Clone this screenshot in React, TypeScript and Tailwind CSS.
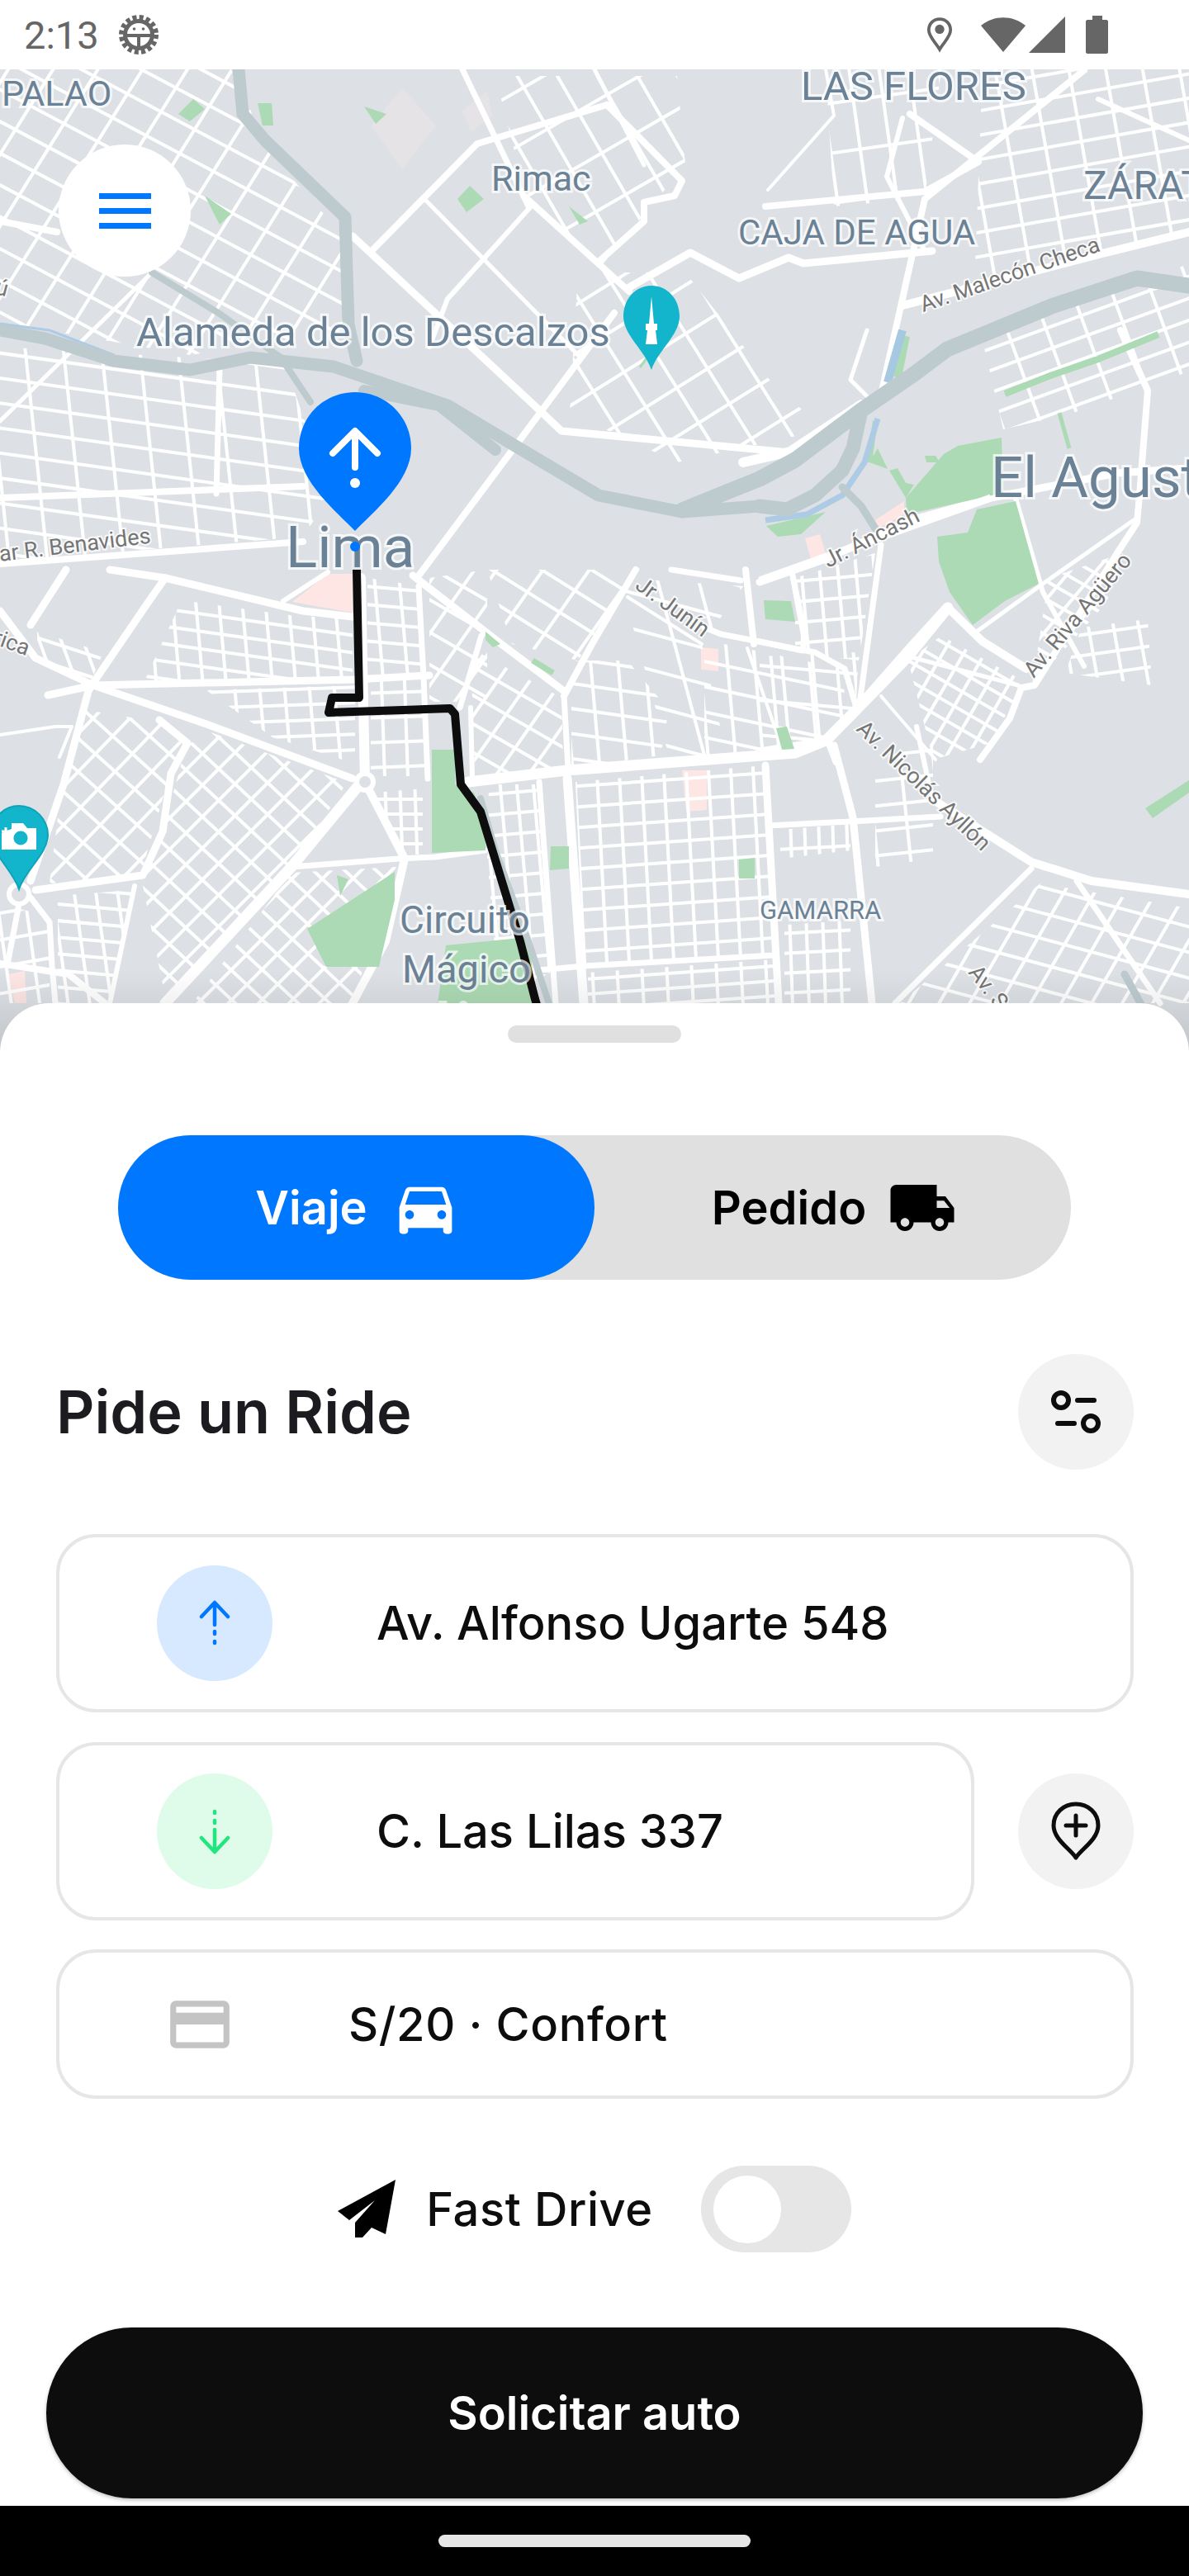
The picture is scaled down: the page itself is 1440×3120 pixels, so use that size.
import React from 'react';
import { MdDirectionsCar, MdLocalShipping, MdCreditCard } from 'react-icons/md';

type Pts = string;

// dense street blocks: two families of parallel lines clipped to a polygon
const GRIDS: { pts: Pts; a1: number; a2: number; s1: number; s2: number; w?: number }[] = [
  { pts: '0,84 280,84 330,190 420,290 420,400 230,430 0,390', a1: 28, a2: -58, s1: 34, s2: 46 },
  { pts: '0,420 345,440 400,600 367,650 0,680', a1: 8, a2: 84, s1: 30, s2: 46 },
  { pts: '45,765 125,790 110,825 45,795', a1: 18, a2: 70, s1: 25, s2: 25 },
  { pts: '220,727 350,745 427,750 427,820 175,825', a1: 8, a2: 85, s1: 21, s2: 28 },
  { pts: '445,700 510,710 512,815 445,820', a1: 5, a2: 85, s1: 22, s2: 30 },
  { pts: '250,836 430,830 430,925 330,893', a1: -2, a2: 85, s1: 19, s2: 30 },
  { pts: '449,825 512,822 518,940 449,940', a1: -2, a2: 88, s1: 30, s2: 28 },
  { pts: '452,960 512,955 512,1035 486,1035', a1: 0, a2: 88, s1: 18, s2: 18 },
  { pts: '225,905 250,885 420,948 353,1050 200,1207 173,1073 197,1007', a1: 43, a2: -45, s1: 28, s2: 27 },
  { pts: '105,860 193,875 225,905 205,940 170,1060 60,1070 75,950', a1: 42, a2: -46, s1: 30, s2: 32 },
  { pts: '353,1057 480,1050 440,1130 373,1123 393,1170 440,1170 430,1215 233,1215', a1: 43, a2: -45, s1: 26, s2: 26 },
  { pts: '70,1085 160,1078 130,1215 70,1215', a1: 5, a2: 82, s1: 20, s2: 26 },
  { pts: '520,700 590,690 590,850 520,850', a1: 30, a2: -55, s1: 34, s2: 36 },
  { pts: '590,690 770,690 700,800 620,780', a1: 32, a2: -55, s1: 32, s2: 46 },
  { pts: '570,785 680,845 682,930 575,940', a1: 30, a2: -55, s1: 30, s2: 32 },
  { pts: '692,800 760,800 810,860 800,915 692,930', a1: 8, a2: 85, s1: 30, s2: 33 },
  { pts: '750,700 900,710 850,780 880,915 810,915', a1: 15, a2: 75, s1: 42, s2: 48 },
  { pts: '853,775 1020,810 1025,865 990,900 853,918', a1: 12, a2: 85, s1: 30, s2: 33 },
  { pts: '592,950 650,950 670,1175 605,1215 590,1040', a1: -5, a2: 85, s1: 25, s2: 20 },
  { pts: '697,947 927,927 940,1155 707,1172', a1: -4, a2: 87, s1: 25, s2: 27 },
  { pts: '712,1178 937,1162 945,1215 712,1215', a1: -4, a2: 87, s1: 18, s2: 30 },
  { pts: '945,1005 1030,998 1030,1030 945,1040', a1: -3, a2: 88, s1: 30, s2: 17 },
  { pts: '950,1120 1030,1115 1030,1215 950,1215', a1: -3, a2: 88, s1: 24, s2: 20 },
  { pts: '1190,84 1440,84 1440,285 1180,350', a1: -10, a2: 80, s1: 29, s2: 44 },
  { pts: '1187,400 1440,320 1440,450 1300,500 1215,520', a1: -20, a2: 70, s1: 25, s2: 45 },
  { pts: '963,700 1060,670 1040,800 963,790', a1: -5, a2: 85, s1: 25, s2: 22 },
  { pts: '920,795 1040,790 1035,890 920,905', a1: 5, a2: 85, s1: 42, s2: 50 },
  { pts: '1140,770 1240,825 1200,900 1130,920 1100,800', a1: 30, a2: -60, s1: 20, s2: 22 },
  { pts: '1270,700 1360,670 1340,730 1250,830', a1: 30, a2: -50, s1: 19, s2: 24 },
  { pts: '1310,760 1390,750 1395,830 1290,815', a1: -8, a2: 80, s1: 25, s2: 30 },
  { pts: '1260,1070 1440,1100 1440,1215 1090,1215', a1: -60, a2: 15, s1: 32, s2: 30 },
  { pts: '1060,920 1130,900 1130,1040 1060,1050', a1: -6, a2: 84, s1: 30, s2: 40 },
  { pts: '700,330 830,330 940,470 1000,520 820,560 690,500', a1: 58, a2: -32, s1: 44, s2: 50 },
  { pts: '600,92 820,92 830,200 730,320 640,250', a1: 60, a2: -30, s1: 42, s2: 58 },
  { pts: '1000,84 1140,84 1120,240 1010,250', a1: 82, a2: -8, s1: 36, s2: 60 },
  { pts: '0,1095 60,1110 60,1215 0,1215', a1: -10, a2: 82, s1: 32, s2: 34 },
];

const ROADS: { d: string; w: number }[] = [
  { d: 'M58 842L113 830L430 823L520 818', w: 9 },
  { d: 'M0 740L43 797L113 830L250 877L427 943', w: 9 },
  { d: 'M200 700L177 733L113 827L107 837L77 950L37 1067', w: 9 },
  { d: 'M80 690L37 757', w: 9 },
  { d: 'M133 690L200 700L367 740L427 747', w: 9 },
  { d: 'M343 728L397 693', w: 6 },
  { d: 'M437 700L440 850L442 947', w: 12 },
  { d: 'M507 710L513 820L518 943', w: 7 },
  { d: 'M433 953L353 1050L200 1215', w: 13 },
  { d: 'M447 957L490 1040L467 1140L427 1215', w: 10 },
  { d: 'M353 1050L483 1040L527 1038L587 1030', w: 7 },
  { d: 'M193 872L227 900L207 937L197 1007L173 1060L43 1078', w: 9 },
  { d: 'M163 1073L133 1215', w: 6 },
  { d: 'M23 1095L10 1163', w: 7 },
  { d: 'M37 1087L60 1117L63 1170L67 1215', w: 7 },
  { d: 'M0 1167L83 1180L127 1215', w: 8 },
  { d: 'M0 890L67 880L87 880L72 917', w: 4 },
  { d: 'M567 947L687 933L963 912L1000 897L1030 867L1100 795L1148 736', w: 13 },
  { d: 'M683 843L717 780L770 690', w: 8 },
  { d: 'M683 843L688 930', w: 7 },
  { d: 'M500 697L607 780L683 837', w: 9 },
  { d: 'M557 857L583 770', w: 7 },
  { d: 'M570 857L572 943', w: 6 },
  { d: 'M653 947L673 1215', w: 7 },
  { d: 'M687 943L707 1215', w: 11 },
  { d: 'M927 927L943 1215', w: 9 },
  { d: 'M1010 903L1033 990L1056 1215', w: 9 },
  { d: 'M653 1175L707 1170L937 1157', w: 7 },
  { d: 'M930 1000L1030 995L1139 989', w: 7 },
  { d: 'M813 690L897 703', w: 7 },
  { d: 'M853 760L873 768L970 787L987 790L1023 810L1038 860', w: 7 },
  { d: 'M903 690L913 780', w: 8 },
  { d: 'M960 700L973 770L972 788', w: 6 },
  { d: 'M760 723L850 780', w: 4 },
  { d: 'M905 785L945 900', w: 4 },
  { d: 'M920 705L1000 677L1103 630L1200 603L1353 573L1440 567', w: 9 },
  { d: 'M1230 603L1260 707L1263 717L1313 807', w: 6 },
  { d: 'M1357 400L1390 473L1380 600L1377 633L1353 670L1253 830L1237 833L1223 870L1187 920', w: 8 },
  { d: 'M1067 660L1040 860', w: 7 },
  { d: 'M960 697L975 770L972 788L920 777', w: 7 },
  { d: 'M1003 897L1103 783L1147 735L1190 777L1243 810', w: 10 },
  { d: 'M1100 795L1233 830', w: 5 },
  { d: 'M1180 767L1263 707L1373 630', w: 5 },
  { d: 'M920 910L1003 897L1013 923', w: 9 },
  { d: 'M1067 843L1133 920', w: 4 },
  { d: 'M1129 968L1249 1044L1322 1067L1440 1083', w: 10 },
  { d: 'M1110 880L1129 968', w: 6 },
  { d: 'M1249 1052L1084 1215', w: 7 },
  { d: 'M1304 1067L1405 1215', w: 7 },
  { d: 'M735 127L578 174L450 304', w: 8 },
  { d: 'M735 127L826 219L817 237L780 245L780 268L725 317', w: 8 },
  { d: 'M634 237L762 353', w: 8 },
  { d: 'M427 286L661 504L680 522L946 547', w: 9 },
  { d: 'M514 241L700 430', w: 5 },
  { d: 'M643 250L542 362L520 420', w: 6 },
  { d: 'M762 348L836 306L895 337L955 312L973 319L1129 304', w: 9 },
  { d: 'M927 250L1120 232L1185 196L1102 138', w: 8 },
  { d: 'M1313 85L1120 241L1065 487', w: 8 },
  { d: 'M1093 143L1074 214L1120 304', w: 6 },
  { d: 'M1093 370L1331 308L1440 281', w: 10 },
  { d: 'M900 560L957 547L1043 490', w: 12 },
  { d: 'M1050 400L1030 460L1050 480', w: 5 },
  { d: 'M0 603L367 589', w: 8 },
  { d: 'M0 683L367 656', w: 8 },
  { d: 'M0 268L69 281', w: 8 },
  { d: 'M266 446L262 598', w: 7 },
  { d: 'M744 379L634 527L505 700', w: 8 },
  { d: 'M560 84L640 250', w: 7 },
  { d: 'M720 84L780 200', w: 5 },
  { d: 'M1000 84L1010 140L930 230', w: 4 },
  { d: 'M0 510L184 330', w: 5 },
  { d: 'M1330 120L1440 170', w: 6 },
];

const GREENS: Pts[] = [
  '1097,603 1143,550 1160,540 1213,530 1215,597 1098,623',
  '1183,617 1230,607 1258,707 1217,728 1178,757 1150,717 1137,680 1135,650 1172,645',
  '1053,560 1063,543 1075,568',
  '1077,570 1087,567 1097,585 1107,587 1097,603',
  '1120,552 1133,552 1138,560 1122,560',
  '928,637 1000,620 970,647 942,650',
  '925,727 958,728 963,753 927,750',
  '940,882 953,880 962,907 947,908',
  '523,908 551,908 551,950 574,960 588,1006 588,1030 523,1033',
  '478,1056 372,1125 395,1171 459,1171 478,1090',
  '667,1025 689,1025 689,1052 666,1054',
  '895,1041 914,1039 914,1064 895,1064',
  '588,765 606,780 597,784 588,775',
  '1387,979 1440,945 1440,960 1396,991',
  '540,1145 640,1135 650,1215 530,1215',
  '408,1060 422,1065 412,1085',
  '441,129 468,138 455,150',
  '569,225 586,241 565,257 554,241',
  '689,250 712,268 702,272',
  '248,237 280,259 266,272',
  '234,120 248,132 230,147 216,138',
  '312,125 329,125 331,152 318,152',
];

const GREEN_STRIPS: { d: string; w: number }[] = [
  { d: 'M1217 477L1272 455L1330 435L1403 405', w: 8 },
  { d: 'M1283 500L1295 543', w: 5 },
  { d: 'M1097 407L1087 457', w: 10 },
  { d: 'M1060 510L1053 560', w: 6 },
  { d: 'M645 800L670 815', w: 7 },
  { d: 'M775 445L815 390', w: 3 },
];

const PINKS: { pts: Pts; c: string }[] = [
  { pts: '450,152 487,107 528,152 487,205', c: '#e6e3e6' },
  { pts: '560,134 590,110 596,140 570,160', c: '#e6e3e6' },
  { pts: '354,729 397,695 427,695 427,742', c: '#fde6e3' },
  { pts: '826,933 856,933 856,981 831,983', c: '#fde6e3' },
  { pts: '849,784 870,786 870,813 849,811', c: '#fde6e3' },
  { pts: '975,652 993,647 1000,670 982,677', c: '#fde6e3' },
  { pts: '1060,630 1095,607 1095,623 1063,640', c: '#fde6e3' },
  { pts: '10,1180 30,1176 32,1215 18,1215', c: '#fde6e3' },
];

const LABELS: { t: string; x: number; y: number; s: number }[] = [
  { t: 'PALAO', x: 2, y: 128, s: 43 },
  { t: 'LAS FLORES', x: 970, y: 121, s: 49 },
  { t: 'Rimac', x: 595, y: 231, s: 43 },
  { t: 'CAJA DE AGUA', x: 894, y: 296, s: 42 },
  { t: 'ZÁRATE', x: 1312, y: 241, s: 48 },
  { t: 'Alameda de los Descalzos', x: 165, y: 419, s: 49 },
  { t: 'Lima', x: 346, y: 687, s: 71 },
  { t: 'El Agustino', x: 1200, y: 602, s: 69 },
  { t: 'Circuito', x: 484, y: 1130, s: 46 },
  { t: 'Mágico', x: 487, y: 1190, s: 47 },
  { t: 'Lima', x: 530, y: 1248, s: 47 },
  { t: 'GAMARRA', x: 920, y: 1113, s: 31 },
];

const STREETS: { t: string; x: number; y: number; r: number }[] = [
  { t: 'Av. Malecón Checa', x: 1118, y: 378, r: -19 },
  { t: 'Jr. Áncash', x: 1003, y: 688, r: -27 },
  { t: 'ar R. Benavides', x: 0, y: 680, r: -7 },
  { t: 'Jr. Junín', x: 768, y: 712, r: 36 },
  { t: 'Av. Riva Agüero', x: 1252, y: 822, r: -50 },
  { t: 'Av. Nicolás Ayllón', x: 1036, y: 884, r: 44 },
  { t: 'Av. Santa', x: 1172, y: 1178, r: 52 },
  { t: 'América', x: -62, y: 760, r: 20 },
  { t: 'Perú', x: -46, y: 345, r: 15 },
];

function StreetGrid({ id, pts, a1, a2, s1, s2, w = 4 }: { id: string; pts: Pts; a1: number; a2: number; s1: number; s2: number; w?: number }) {
  const family = (angle: number, step: number) =>
    Array.from({ length: Math.ceil(3000 / step) }, (_, i) => {
      const off = -1500 + i * step;
      return <line key={`${angle}-${i}`} x1={-1800} x2={1800} y1={off} y2={off} transform={`translate(720 650) rotate(${angle})`} />;
    });
  return (
    <g>
      <clipPath id={id}>
        <polygon points={pts} />
      </clipPath>
      <g clipPath={`url(#${id})`} stroke="#ffffff" strokeWidth={w}>
        {family(a1, s1)}
        {family(a2, s2)}
      </g>
    </g>
  );
}

function MapDrawing() {
  return (
    <svg viewBox="0 84 1440 1191" width={1440} height={1191} className="block">
      <rect x="0" y="84" width="1440" height="1191" fill="#dde1e5" />
      {PINKS.map((p) => <polygon key={p.pts} points={p.pts} fill={p.c} />)}
      {GRIDS.map((g, i) => <StreetGrid key={i} id={`grid-${i}`} {...g} />)}
      <g fill="none" stroke="#ffffff" strokeLinejoin="round" strokeLinecap="round">
        {ROADS.map((r) => <path key={r.d} d={r.d} strokeWidth={r.w} />)}
      </g>
      {GREENS.map((g) => <polygon key={g} points={g} fill="#acdab4" />)}
      <g fill="none" stroke="#acdab4">
        {GREEN_STRIPS.map((g) => <path key={g.d} d={g.d} strokeWidth={g.w} />)}
      </g>
      <path d="M920 703L1200 603" fill="none" stroke="#ffffff" strokeWidth="9" />
      <circle cx="442" cy="947" r="10" fill="#dde1e5" stroke="#ffffff" strokeWidth="6" />
      <circle cx="23" cy="1083" r="12" fill="#dde1e5" stroke="#ffffff" strokeWidth="6" />
      <path d="M927 630L977 623L1020 600L1047 560L1063 507" fill="none" stroke="#aecbe6" strokeWidth="7" />
      <path d="M1093 400L1075 463" fill="none" stroke="#a6c8e0" strokeWidth="10" />
      <path d="M0 392L60 400L138 430" fill="none" stroke="#aecbe6" strokeWidth="3" />
      <g fill="none" stroke="#bdcbcf" strokeLinejoin="round" strokeLinecap="round">
        <path d="M0 400L55 410L138 437L230 448L303 433L404 444L542 491L624 540L725 600L826 620L920 613" strokeWidth="15" />
        <path d="M920 613L953 617L987 600L1020 570L1033 543L1043 497" strokeWidth="17" />
        <path d="M826 618L880 596L920 580L963 557L1043 497L1107 453L1147 423L1203 400L1276 370L1377 337L1440 346" strokeWidth="19" />
        <path d="M289 84L294 138L321 170L418 263L422 393L432 437" strokeWidth="15" />
        <path d="M184 330L266 380L340 433L376 487" strokeWidth="8" />
        <path d="M441 473L532 491L600 545" strokeWidth="14" />
        <path d="M1020 590L1043 613L1060 640" strokeWidth="9" />
        <path d="M1362 1180L1395 1240L1440 1300" strokeWidth="9" />
        <path d="M582 967L600 1030L640 1140L668 1225" strokeWidth="8" />
      </g>
      <path d="M432 690L435 845L402 845L398 863L545 858L551 865L558 950L582 983L630 1140L648 1210L668 1275" fill="none" stroke="#0d0d0d" strokeWidth="10" strokeLinejoin="round" />
      <path d="M432 660L432 690" stroke="#a8a8a8" strokeWidth="10" />
      {LABELS.map((l) => (
        <text key={l.t + l.x} x={l.x} y={l.y} fontSize={l.s} fill="#6b8296" stroke="#ffffff" strokeOpacity={0.72} strokeWidth={6} paintOrder="stroke" className="font-[Roboto,sans-serif]">{l.t}</text>
      ))}
      {STREETS.map((s) => (
        <text key={s.t} transform={`translate(${s.x} ${s.y}) rotate(${s.r})`} fontSize={27} fill="#757575" stroke="#ffffff" strokeOpacity={0.8} strokeWidth={4} paintOrder="stroke" className="font-[Roboto,sans-serif]">{s.t}</text>
      ))}
      {/* monument marker */}
      <path d="M789 346C770 346 755 362 755 383C755 406 781 424 789 448C797 424 823 406 823 383C823 362 808 346 789 346Z" fill="#12b5cb" />
      <path d="M789 359L792 392L796 392L796 400L794 400L796 417L782 417L784 400L782 400L782 392L786 392Z" fill="#ffffff" />
      {/* camera marker */}
      <path d="M23 976C4 976 -11 992 -11 1011C-11 1034 15 1053 23 1077C31 1053 58 1034 58 1011C58 992 42 976 23 976Z" fill="#12b5cb" stroke="#0fa3b7" strokeWidth="2" />
      <path d="M2 1029L44 1029L44 1003L33 1003L28 997L14 997L14 1004L2 1009Z" fill="#ffffff" />
      <circle cx="25" cy="1015" r="8.5" fill="#12b5cb" />
      <path d="M7 1002V1012M2 1007H12" stroke="#ffffff" strokeWidth="3" />
      {/* pickup pin */}
      <circle cx="430" cy="662" r="6" fill="#0077ff" />
      <path d="M430 475C392 475 362 505 362 543C362 583 408 620 430 643C452 620 498 583 498 543C498 505 468 475 430 475Z" fill="#0077ff" />
      <path d="M430 566V523M403 549L430 522L457 549" fill="none" stroke="#ffffff" strokeWidth="8" strokeLinecap="round" strokeLinejoin="round" />
      <circle cx="430" cy="585" r="6" fill="#ffffff" />
      <defs>
        <linearGradient id="sheet-shade" x1="0" y1="0" x2="0" y2="1">
          <stop offset="0" stopColor="#000000" stopOpacity="0" />
          <stop offset="1" stopColor="#000000" stopOpacity="0.13" />
        </linearGradient>
      </defs>
      <rect x="0" y="1175" width="1440" height="100" fill="url(#sheet-shade)" />
    </svg>
  );
}

function StatusBar() {
  return (
    <div className="flex h-[84px] items-center justify-between bg-white pl-[29px] pr-[98px]">
      <div className="flex items-center">
        <span className="font-[Roboto,sans-serif] text-[47px] leading-none text-[#666666]">2:13</span>
        <svg width="52" height="52" viewBox="0 0 52 52" className="ml-[22px]">
          <circle cx="26" cy="26" r="21" fill="none" stroke="#666666" strokeWidth="6" strokeDasharray="5 3.25" />
          <circle cx="26" cy="26" r="19" fill="#666666" />
          <circle cx="26" cy="26" r="14" fill="#ffffff" />
          <path d="M12 25H40V29H28V40H24V29H12Z" fill="#666666" />
          <circle cx="20.5" cy="19" r="1.8" fill="#666666" />
          <circle cx="31.5" cy="19" r="1.8" fill="#666666" />
        </svg>
      </div>
      <div className="flex items-center">
        <svg width="32" height="46" viewBox="0 0 34 46" className="mr-[34px]">
          <path d="M17 42C12 33 3 26 3 17C3 9 9 3 17 3C25 3 31 9 31 17C31 26 22 33 17 42Z" fill="none" stroke="#666666" strokeWidth="4" />
          <circle cx="17" cy="16" r="6" fill="#666666" />
        </svg>
        <svg width="54" height="46" viewBox="0 0 54 46" className="mr-[4px]">
          <path d="M27 44L0 12C16 -1 38 -1 54 12Z" fill="#666666" />
        </svg>
        <svg width="44" height="44" viewBox="0 0 44 44" className="mr-[25px]">
          <path d="M44 0V44H0Z" fill="#666666" />
        </svg>
        <svg width="27" height="46" viewBox="0 0 27 46">
          <path d="M8 0H20V5H25C26 5 27 6 27 7V44C27 45 26 46 25 46H2C1 46 0 45 0 44V7C0 6 1 5 2 5H8Z" fill="#666666" />
        </svg>
      </div>
    </div>
  );
}

function AddressRow({ text, bg, color, down }: { text: string; bg: string; color: string; down?: boolean }) {
  return (
    <div className="flex h-[216px] grow items-center rounded-[48px] border-4 border-[#e6e6e6] bg-white pl-[118px]">
      <div className={`flex h-[140px] w-[140px] shrink-0 items-center justify-center rounded-full ${bg}`}>
        <svg width="40" height="56" viewBox="0 0 40 56" fill="none" stroke={color} strokeWidth="4.5" strokeLinecap="round" strokeLinejoin="round" className={down ? 'rotate-180' : ''}>
          <path d="M20 4V30M4 20L20 3L36 20" />
          <path d="M20 38V41M20 50V52" />
        </svg>
      </div>
      <span className="ml-[126px] text-[56px] font-[450] leading-none text-[#0d0d0d]">{text}</span>
    </div>
  );
}

export default function App() {
  return (
    <div className="flex h-[3120px] w-[1440px] flex-col overflow-hidden bg-white font-[Inter,sans-serif]">
      <StatusBar />

      <div className="relative h-[1191px] shrink-0">
        <MapDrawing />
        <button className="absolute left-[71px] top-[91px] flex h-[160px] w-[160px] flex-col items-center justify-center gap-[11px] rounded-full bg-white">
          <span className="h-[7px] w-[63px] bg-[#0077ff]" />
          <span className="h-[7px] w-[63px] bg-[#0077ff]" />
          <span className="h-[7px] w-[63px] bg-[#0077ff]" />
        </button>
      </div>

      <div className="relative -mt-[60px] flex flex-1 flex-col rounded-t-[60px] bg-white pt-[27px]">
        <div className="mx-auto h-[21px] w-[210px] rounded-full bg-[#e0e0e0]" />

        <div className="mx-[143px] mt-[112px] flex h-[175px] rounded-full bg-[#e0e0e0]">
          <div className="flex w-[577px] items-center justify-center gap-[38px] rounded-full bg-[#0077ff] pr-[6px] text-white">
            <span className="text-[56px] font-semibold leading-none">Viaje</span>
            <MdDirectionsCar size={85} className="-mx-[10px]" />
          </div>
          <div className="flex flex-1 items-center justify-center gap-[30px] text-black">
            <span className="text-[56px] font-semibold leading-none">Pedido</span>
            <MdLocalShipping size={84} className="-mx-[4px]" />
          </div>
        </div>

        <div className="ml-[68px] mr-[67px] mt-[90px] flex items-center justify-between">
          <h1 className="text-[72px] font-semibold leading-none text-[#1c1b1f]">Pide un Ride</h1>
          <div className="flex h-[140px] w-[140px] items-center justify-center rounded-full bg-[#f2f2f2]">
            <svg width="60" height="54" viewBox="0 0 60 54" fill="none" stroke="#0d0d0d" strokeWidth="6" strokeLinecap="round">
              <circle cx="12" cy="13" r="9" />
              <path d="M32 13H52" />
              <circle cx="48" cy="41" r="9" />
              <path d="M8 41H28" />
            </svg>
          </div>
        </div>

        <div className="ml-[68px] mr-[67px] mt-[78px] flex flex-col">
          <AddressRow text="Av. Alfonso Ugarte 548" bg="bg-[#d7e9ff]" color="#0077ff" />

          <div className="mt-[36px] flex items-center gap-[53px]">
            <AddressRow text="C. Las Lilas 337" bg="bg-[#dffbea]" color="#22e580" down />
            <div className="flex h-[140px] w-[140px] shrink-0 items-center justify-center rounded-full bg-[#f2f2f2]">
              <svg width="62" height="72" viewBox="0 0 62 72" fill="none" stroke="#0d0d0d" strokeWidth="5" strokeLinecap="round" strokeLinejoin="round">
                <path d="M31 68C25 58 4 46 4 29C4 14 16 3 31 3C46 3 58 14 58 29C58 46 37 58 31 68Z" />
                <path d="M31 17V41M19 29H43" />
              </svg>
            </div>
          </div>

          <div className="mt-[35px] flex h-[181px] items-center rounded-[48px] border-4 border-[#e6e6e6] bg-white pl-[127px]">
            <MdCreditCard size={86} className="text-[#c4c4c4]" />
            <span className="ml-[137px] text-[56px] font-[450] leading-none tracking-[0.6px] text-[#0d0d0d]">S/20 · Confort</span>
          </div>
        </div>

        <div className="mt-[81px] flex items-center justify-center">
          <svg width="72" height="72" viewBox="0 0 72 72">
            <path d="M70 0L0 38L14 49L45 25L21 52L21 70L30 70L41 58L58 66Z" fill="#000000" />
          </svg>
          <span className="ml-[35px] text-[56px] font-[450] leading-none tracking-[0.6px] text-[#0d0d0d]">Fast Drive</span>
          <div className="ml-[58px] flex h-[105px] w-[182px] items-center rounded-full bg-[#e6e6e6] pl-[15px]">
            <div className="h-[82px] w-[82px] rounded-full bg-white" />
          </div>
        </div>

        <button className="mx-[56px] mt-[91px] flex h-[207px] items-center justify-center rounded-full bg-[#0d0d0d] text-[56px] font-semibold text-white shadow-[0_2px_4px_rgba(0,0,0,0.25)]">
          Solicitar auto
        </button>
      </div>

      <div className="flex h-[85px] shrink-0 items-start justify-center bg-black pt-[35px]">
        <div className="h-[15px] w-[378px] rounded-full bg-[#e6e6e6]" />
      </div>
    </div>
  );
}
